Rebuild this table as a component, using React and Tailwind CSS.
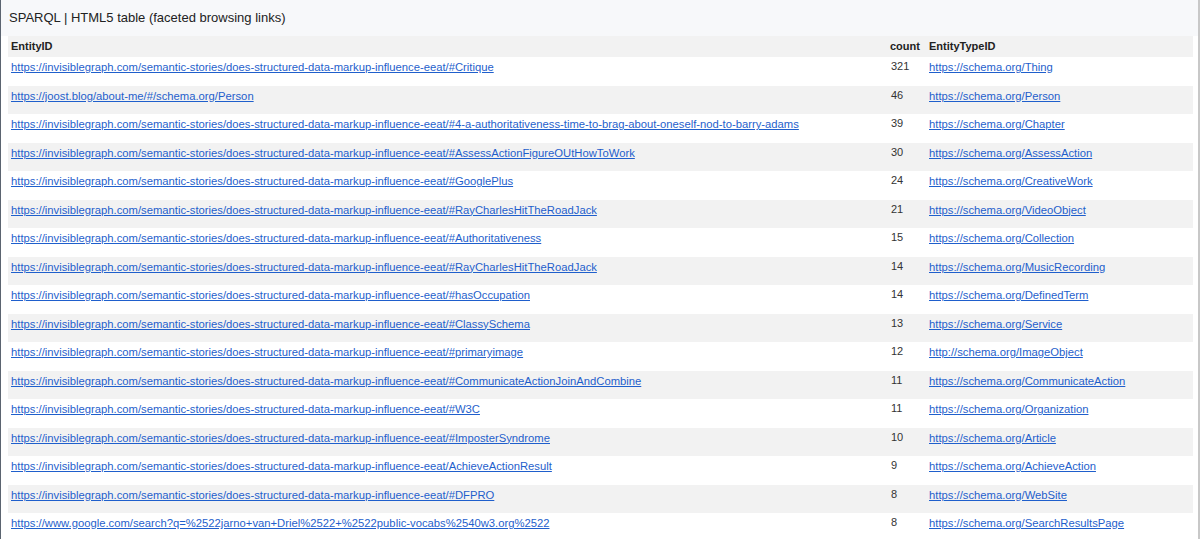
import React from "react";

const BASE = "https://invisiblegraph.com/semantic-stories/does-structured-data-markup-influence-eeat/";

const rows = [
  [BASE + "#Critique", "321", "https://schema.org/Thing"],
  ["https://joost.blog/about-me/#/schema.org/Person", "46", "https://schema.org/Person"],
  [BASE + "#4-a-authoritativeness-time-to-brag-about-oneself-nod-to-barry-adams", "39", "https://schema.org/Chapter"],
  [BASE + "#AssessActionFigureOUtHowToWork", "30", "https://schema.org/AssessAction"],
  [BASE + "#GooglePlus", "24", "https://schema.org/CreativeWork"],
  [BASE + "#RayCharlesHitTheRoadJack", "21", "https://schema.org/VideoObject"],
  [BASE + "#Authoritativeness", "15", "https://schema.org/Collection"],
  [BASE + "#RayCharlesHitTheRoadJack", "14", "https://schema.org/MusicRecording"],
  [BASE + "#hasOccupation", "14", "https://schema.org/DefinedTerm"],
  [BASE + "#ClassySchema", "13", "https://schema.org/Service"],
  [BASE + "#primaryimage", "12", "http://schema.org/ImageObject"],
  [BASE + "#CommunicateActionJoinAndCombine", "11", "https://schema.org/CommunicateAction"],
  [BASE + "#W3C", "11", "https://schema.org/Organization"],
  [BASE + "#ImposterSyndrome", "10", "https://schema.org/Article"],
  [BASE + "AchieveActionResult", "9", "https://schema.org/AchieveAction"],
  [BASE + "#DFPRO", "8", "https://schema.org/WebSite"],
  ["https://www.google.com/search?q=%2522jarno+van+Driel%2522+%2522public-vocabs%2540w3.org%2522", "8", "https://schema.org/SearchResultsPage"],
];

export default function App() {
  return (
    <div
      className="h-[539px] w-[1200px] overflow-hidden bg-white text-[#222]"
      style={{ fontFamily: '"Liberation Sans", Arial, sans-serif' }}
    >
      <div className="h-full border-l border-l-[#5b6470] border-r-2 border-r-[#c8c8c8] bg-white">
        {/* titel */}
        <div className="h-[36px] bg-[#f7f8fa] pl-[8px] pt-[9px] text-[13px] leading-[17px] text-[#222]">
          SPARQL | HTML5 table (faceted browsing links)
        </div>

        <div className="pl-[7px] pr-[5px]">
          <table className="w-full table-fixed border-collapse text-[11.25px]">
            <colgroup>
              <col className="w-[880px]" />
              <col className="w-[38px]" />
              <col />
            </colgroup>
            <thead>
              <tr className="h-[21px] bg-[#f2f2f2]">
                <th className="pl-[3px] text-left align-middle text-[11px] font-bold">EntityID</th>
                <th className="pl-[2px] text-left align-middle text-[11px] font-bold">count</th>
                <th className="pl-[3px] text-left align-middle text-[11px] font-bold">EntityTypeID</th>
              </tr>
            </thead>
            <tbody>
              {rows.map((r, i) => (
                <tr key={i} className={"h-[28.5px] " + (i % 2 === 1 ? "bg-[#f2f2f2]" : "bg-white")}>
                  <td className="pl-[3px] pt-[3px] align-top leading-[14px]">
                    <a href="#" className="text-[#1f5fcc] underline whitespace-nowrap">{r[0]}</a>
                  </td>
                  <td className="pl-[3px] pt-[2px] align-top text-[11px] leading-[14px] text-[#333]">{r[1]}</td>
                  <td className="pl-[3px] pt-[3px] align-top leading-[14px]">
                    <a href="#" className="text-[#1f5fcc] underline whitespace-nowrap">{r[2]}</a>
                  </td>
                </tr>
              ))}
            </tbody>
          </table>
        </div>
      </div>
    </div>
  );
}
